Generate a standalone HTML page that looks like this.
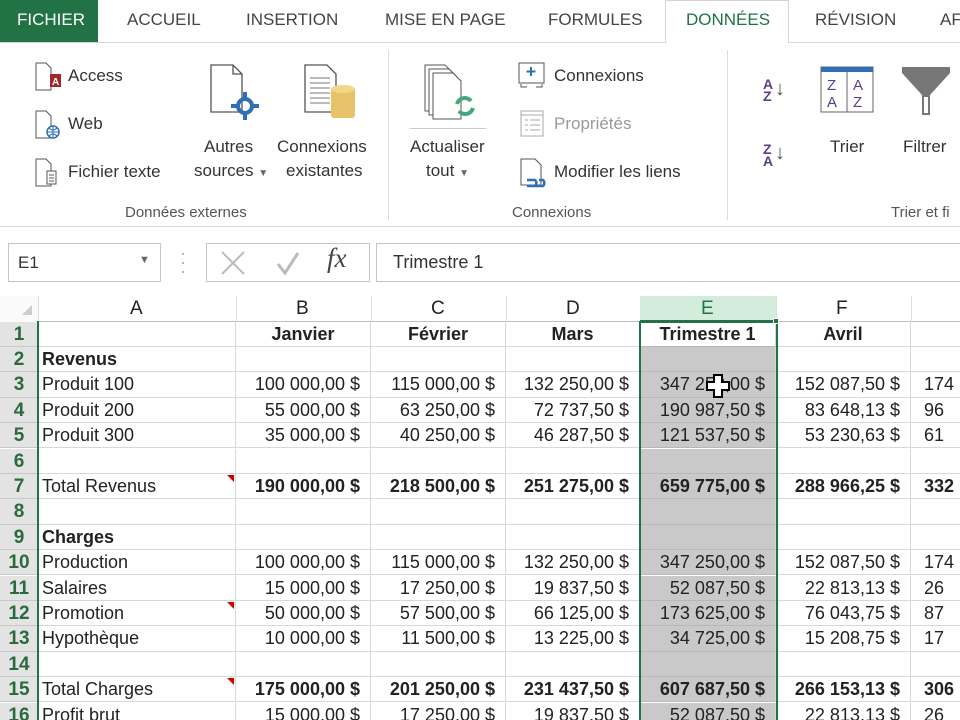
<!DOCTYPE html>
<html style="width:960px;height:720px;overflow:hidden"><head><meta charset="utf-8"><style>
*{margin:0;padding:0;box-sizing:border-box}
body{width:960px;height:720px;overflow:hidden;background:#fff;font-family:"Liberation Sans",Arial,sans-serif;position:relative;color:#222}
.a{position:absolute;white-space:nowrap}
.tab{position:absolute;top:10px;font-size:17px;color:#444}
.rb{font-size:17px;color:#333}
.grp{font-size:15px;color:#555;top:204px}
.row{position:absolute;left:0;height:25.4px;width:960px;font-size:18px}
.row div{position:absolute;top:0;height:25.4px;line-height:25px;border-right:1px solid #d8d8d8;border-bottom:1px solid #d8d8d8;white-space:nowrap;overflow:hidden}
.rh{left:0;width:38px;background:#e3e3e3;color:#2a6a3e;text-align:center;font-size:19px;font-weight:bold;border-right:none!important;border-bottom:1px solid #c8c8c8!important}
.ca{left:38px;width:198px;padding-left:4px}
.cb{left:236px;width:135px;text-align:right;padding-right:10px}
.cc{left:371px;width:135px;text-align:right;padding-right:10px}
.cd{left:506px;width:134px;text-align:right;padding-right:10px}
.ce{left:640px;width:136px;text-align:right;padding-right:10px;background:#c9c9c9;border-bottom-color:#b8b8b8!important}
.cf{left:776px;width:135px;text-align:right;padding-right:10px}
.cg{left:911px;width:60px;padding-left:13px}
.b{font-weight:bold}
.c{text-align:center!important;padding:0!important}
.tri{position:absolute;right:1px;top:1px;width:0;height:0;border-top:7px solid #c00;border-left:7px solid transparent}
</style></head><body>
<div class="a" style="left:0;top:0;width:98px;height:42px;background:#217346"></div>
<div class="tab" style="left:17px;color:#fff">FICHIER</div>
<div class="tab" style="left:127px">ACCUEIL</div>
<div class="tab" style="left:246px">INSERTION</div>
<div class="tab" style="left:385px">MISE EN PAGE</div>
<div class="tab" style="left:548px">FORMULES</div>
<div class="a" style="left:665px;top:0;width:124px;height:43px;border:1px solid #d4d4d4;border-bottom:none;background:#fff;z-index:2"></div>
<div class="tab" style="left:686px;color:#217346;z-index:3">DONNÉES</div>
<div class="tab" style="left:815px">RÉVISION</div>
<div class="tab" style="left:940px">AF</div>
<div class="a" style="left:0;top:42px;width:960px;height:1px;background:#d4d4d4"></div>
<div class="a" style="left:0;top:226px;width:960px;height:1px;background:#d4d4d4"></div>
<div class="a" style="left:388px;top:50px;width:1px;height:170px;background:#dcdcdc"></div>
<div class="a" style="left:727px;top:50px;width:1px;height:170px;background:#dcdcdc"></div>

<svg class="a" style="left:34px;top:62px" width="30" height="30"><path d="M2 1h10l5 5v22H2z" fill="#fff" stroke="#555"/><rect x="16" y="12" width="11" height="13" fill="#a4262c"/><text x="18" y="23" font-size="10" fill="#fff" font-family="Liberation Sans" font-weight="bold">A</text></svg>
<div class="a rb" style="left:68px;top:66px">Access</div>
<svg class="a" style="left:34px;top:110px" width="30" height="30"><path d="M2 1h10l5 5v22H2z" fill="#fff" stroke="#555"/><circle cx="19" cy="22" r="6" fill="#fff" stroke="#2e6fb5" stroke-width="1.5"/><path d="M13 22h12M19 16v12M15 18q4 4 8 0M15 26q4-4 8 0" stroke="#2e6fb5" fill="none"/></svg>
<div class="a rb" style="left:68px;top:114px">Web</div>
<svg class="a" style="left:34px;top:158px" width="30" height="30"><path d="M2 1h10l5 5v22H2z" fill="#fff" stroke="#555"/><rect x="13" y="13" width="9" height="13" fill="#fff" stroke="#555"/><path d="M15 17h5M15 20h5M15 23h5" stroke="#555"/></svg>
<div class="a rb" style="left:68px;top:162px">Fichier texte</div>
<svg class="a" style="left:208px;top:62px" width="56" height="62"><path d="M3 3h22l9 9v38H3z" fill="#fff" stroke="#555" stroke-width="1.3"/><path d="M25 3v9h9" fill="none" stroke="#555" stroke-width="1.3"/><circle cx="37" cy="44" r="7" fill="none" stroke="#2e6fb5" stroke-width="4"/><path d="M37 30v8M37 50v8M23 44h8M43 44h8" stroke="#2e6fb5" stroke-width="4"/></svg>
<div class="a rb" style="left:204px;top:137px">Autres</div>
<div class="a rb" style="left:194px;top:161px">sources <span style="font-size:10px;color:#666">▼</span></div>
<svg class="a" style="left:302px;top:62px" width="56" height="62"><path d="M3 3h22l9 9v38H3z" fill="#fff" stroke="#555" stroke-width="1.3"/><path d="M8 16h20M8 21h20M8 26h20M8 31h20M8 36h20M8 41h20" stroke="#777"/><rect x="29" y="26" width="24" height="30" rx="3" fill="#e8c26a"/><ellipse cx="41" cy="27" rx="12" ry="4" fill="#f3d68a"/></svg>
<div class="a rb" style="left:277px;top:137px">Connexions</div>
<div class="a rb" style="left:286px;top:161px">existantes</div>
<div class="a grp" style="left:125px">Données externes</div>

<svg class="a" style="left:422px;top:62px" width="60" height="62"><path d="M3 3h20l8 8v38H3z" fill="#fff" stroke="#555"/><path d="M7 7h20l8 8v38H7z" fill="#fff" stroke="#555"/><path d="M11 11h20l8 8v38H11z" fill="#fff" stroke="#555"/><path d="M35 42a8 8 0 0 1 14-3M51 46a8 8 0 0 1-14 3" stroke="#3fa77a" stroke-width="4" fill="none"/></svg>
<div class="a" style="left:410px;top:128px;width:76px;height:1px;background:#ccc"></div>
<div class="a rb" style="left:410px;top:137px">Actualiser</div>
<div class="a rb" style="left:426px;top:161px">tout <span style="font-size:10px;color:#666">▼</span></div>
<svg class="a" style="left:518px;top:62px" width="28" height="26"><rect x="1" y="1" width="25" height="20" fill="#fff" stroke="#555"/><path d="M13 5v9M8.5 9.5h9" stroke="#2e6fb5" stroke-width="2"/><path d="M3 22v3h6M18 25h6v-3" stroke="#555" fill="none"/></svg>
<div class="a rb" style="left:554px;top:66px">Connexions</div>
<svg class="a" style="left:520px;top:110px" width="26" height="28"><rect x="1" y="1" width="22" height="25" fill="#fff" stroke="#aaa"/><path d="M1 5h22M5 10h3M10 10h10M5 15h3M10 15h10M5 20h3M10 20h10" stroke="#aaa"/></svg>
<div class="a rb" style="left:554px;top:114px;color:#999">Propriétés</div>
<svg class="a" style="left:518px;top:157px" width="30" height="32"><path d="M3 2h14l6 6v20H3z" fill="#fff" stroke="#555"/><path d="M9 23h8a4 4 0 0 1 0 6h-8M21 23h4a4 4 0 0 1 0 6h-8" stroke="#2e6fb5" stroke-width="2.5" fill="none"/></svg>
<div class="a rb" style="left:554px;top:162px">Modifier les liens</div>
<div class="a grp" style="left:512px">Connexions</div>

<div class="a" style="left:763px;top:78px;font-size:14px;line-height:12px;color:#5b3d8a;font-weight:bold">A<br>Z</div>
<div class="a" style="left:775px;top:78px;font-size:20px;color:#555">↓</div>
<div class="a" style="left:763px;top:143px;font-size:14px;line-height:12px;color:#5b3d8a;font-weight:bold">Z<br>A</div>
<div class="a" style="left:775px;top:142px;font-size:20px;color:#555">↓</div>
<svg class="a" style="left:820px;top:65px" width="56" height="50"><rect x="1" y="2" width="52" height="45" fill="#fff" stroke="#666"/><rect x="1" y="2" width="52" height="5" fill="#2e6fb5"/><path d="M27 7v40" stroke="#666"/><text x="7" y="25" font-size="15" fill="#5b3d8a" font-family="Liberation Sans">Z</text><text x="7" y="42" font-size="15" fill="#5b3d8a" font-family="Liberation Sans">A</text><text x="33" y="25" font-size="15" fill="#5b3d8a" font-family="Liberation Sans">A</text><text x="33" y="42" font-size="15" fill="#5b3d8a" font-family="Liberation Sans">Z</text></svg>
<div class="a rb" style="left:830px;top:137px">Trier</div>
<svg class="a" style="left:900px;top:65px" width="52" height="52"><path d="M2 2h48v6L30 30v20h-8V30L2 8z" fill="#777"/><path d="M24 32v16h4V32" fill="#fff"/></svg>
<div class="a rb" style="left:903px;top:137px">Filtrer</div>
<div class="a grp" style="left:891px">Trier et fi</div>

<div class="a" style="left:8px;top:243px;width:153px;height:39px;border:1px solid #c6c6c6"></div>
<div class="a" style="left:18px;top:253px;font-size:17px;color:#333">E1</div>
<div class="a" style="left:139px;top:254px;font-size:11px;color:#666">▼</div>
<div class="a" style="left:180px;top:249px;font-size:18px;color:#aaa;line-height:9px">·<br>·<br>·</div>
<div class="a" style="left:206px;top:243px;width:164px;height:39px;border:1px solid #c6c6c6"></div>
<svg class="a" style="left:218px;top:248px" width="140" height="30"><path d="M4 4l22 22M26 4L4 26" stroke="#bbb" stroke-width="2"/><path d="M60 16l7 9 13-20" stroke="#bbb" stroke-width="3" fill="none"/></svg>
<div class="a" style="left:327px;top:243px;font-size:27px;font-family:'Liberation Serif',serif;font-style:italic;color:#444">fx</div>
<div class="a" style="left:376px;top:243px;width:600px;height:39px;border:1px solid #c6c6c6"></div>
<div class="a" style="left:393px;top:252px;font-size:18px;color:#333">Trimestre 1</div>

<div class="a" style="left:0;top:296px;width:960px;height:26px;background:#fff;border-bottom:1px solid #bfbfbf"></div>
<div class="a" style="left:0;top:296px;width:38px;height:26px;background:#fafafa"></div>
<div class="a" style="left:22px;top:305px;width:0;height:0;border-bottom:10px solid #ccc;border-left:10px solid transparent"></div>
<div class="a" style="left:640px;top:296px;width:136px;height:26px;background:#d3ecdc;border-bottom:2px solid #217346"></div>
<div class="a" style="left:38px;top:296px;width:1px;height:26px;background:#ddd"></div>
<div class="a" style="left:236px;top:296px;width:1px;height:26px;background:#ddd"></div>
<div class="a" style="left:371px;top:296px;width:1px;height:26px;background:#ddd"></div>
<div class="a" style="left:506px;top:296px;width:1px;height:26px;background:#ddd"></div>
<div class="a" style="left:776px;top:296px;width:1px;height:26px;background:#ddd"></div>
<div class="a" style="left:911px;top:296px;width:1px;height:26px;background:#ddd"></div>
<div class="a" style="left:130px;top:298px;font-size:19px">A</div>
<div class="a" style="left:296px;top:298px;font-size:19px">B</div>
<div class="a" style="left:431px;top:298px;font-size:19px">C</div>
<div class="a" style="left:566px;top:298px;font-size:19px">D</div>
<div class="a" style="left:701px;top:298px;font-size:19px;color:#217346">E</div>
<div class="a" style="left:836px;top:298px;font-size:19px">F</div>

<div class="row" style="top:321.5px"><div class="rh">1</div><div class="ca"></div><div class="cb b c">Janvier</div><div class="cc b c">Février</div><div class="cd b c">Mars</div><div class="ce b c" style="background:#fff">Trimestre 1</div><div class="cf b c">Avril</div><div class="cg"></div></div>
<div class="row" style="top:346.9px"><div class="rh">2</div><div class="ca b">Revenus</div><div class="cb"></div><div class="cc"></div><div class="cd"></div><div class="ce"></div><div class="cf"></div><div class="cg"></div></div>
<div class="row" style="top:372.3px"><div class="rh">3</div><div class="ca">Produit 100</div><div class="cb">100 000,00 $</div><div class="cc">115 000,00 $</div><div class="cd">132 250,00 $</div><div class="ce">347 250,00 $</div><div class="cf">152 087,50 $</div><div class="cg">174</div></div>
<div class="row" style="top:397.7px"><div class="rh">4</div><div class="ca">Produit 200</div><div class="cb">55 000,00 $</div><div class="cc">63 250,00 $</div><div class="cd">72 737,50 $</div><div class="ce">190 987,50 $</div><div class="cf">83 648,13 $</div><div class="cg">96</div></div>
<div class="row" style="top:423.1px"><div class="rh">5</div><div class="ca">Produit 300</div><div class="cb">35 000,00 $</div><div class="cc">40 250,00 $</div><div class="cd">46 287,50 $</div><div class="ce">121 537,50 $</div><div class="cf">53 230,63 $</div><div class="cg">61</div></div>
<div class="row" style="top:448.5px"><div class="rh">6</div><div class="ca"></div><div class="cb"></div><div class="cc"></div><div class="cd"></div><div class="ce"></div><div class="cf"></div><div class="cg"></div></div>
<div class="row" style="top:473.9px"><div class="rh">7</div><div class="ca">Total Revenus<span class="tri"></span></div><div class="cb b">190 000,00 $</div><div class="cc b">218 500,00 $</div><div class="cd b">251 275,00 $</div><div class="ce b">659 775,00 $</div><div class="cf b">288 966,25 $</div><div class="cg b">332</div></div>
<div class="row" style="top:499.3px"><div class="rh">8</div><div class="ca"></div><div class="cb"></div><div class="cc"></div><div class="cd"></div><div class="ce"></div><div class="cf"></div><div class="cg"></div></div>
<div class="row" style="top:524.7px"><div class="rh">9</div><div class="ca b">Charges</div><div class="cb"></div><div class="cc"></div><div class="cd"></div><div class="ce"></div><div class="cf"></div><div class="cg"></div></div>
<div class="row" style="top:550.1px"><div class="rh">10</div><div class="ca">Production</div><div class="cb">100 000,00 $</div><div class="cc">115 000,00 $</div><div class="cd">132 250,00 $</div><div class="ce">347 250,00 $</div><div class="cf">152 087,50 $</div><div class="cg">174</div></div>
<div class="row" style="top:575.5px"><div class="rh">11</div><div class="ca">Salaires</div><div class="cb">15 000,00 $</div><div class="cc">17 250,00 $</div><div class="cd">19 837,50 $</div><div class="ce">52 087,50 $</div><div class="cf">22 813,13 $</div><div class="cg">26</div></div>
<div class="row" style="top:600.9px"><div class="rh">12</div><div class="ca">Promotion<span class="tri"></span></div><div class="cb">50 000,00 $</div><div class="cc">57 500,00 $</div><div class="cd">66 125,00 $</div><div class="ce">173 625,00 $</div><div class="cf">76 043,75 $</div><div class="cg">87</div></div>
<div class="row" style="top:626.3px"><div class="rh">13</div><div class="ca">Hypothèque</div><div class="cb">10 000,00 $</div><div class="cc">11 500,00 $</div><div class="cd">13 225,00 $</div><div class="ce">34 725,00 $</div><div class="cf">15 208,75 $</div><div class="cg">17</div></div>
<div class="row" style="top:651.7px"><div class="rh">14</div><div class="ca"></div><div class="cb"></div><div class="cc"></div><div class="cd"></div><div class="ce"></div><div class="cf"></div><div class="cg"></div></div>
<div class="row" style="top:677.1px"><div class="rh">15</div><div class="ca">Total Charges<span class="tri"></span></div><div class="cb b">175 000,00 $</div><div class="cc b">201 250,00 $</div><div class="cd b">231 437,50 $</div><div class="ce b">607 687,50 $</div><div class="cf b">266 153,13 $</div><div class="cg b">306</div></div>
<div class="row" style="top:702.5px"><div class="rh">16</div><div class="ca">Profit brut</div><div class="cb">15 000,00 $</div><div class="cc">17 250,00 $</div><div class="cd">19 837,50 $</div><div class="ce">52 087,50 $</div><div class="cf">22 813,13 $</div><div class="cg">26</div></div>

<div class="a" style="left:37px;top:321px;width:2px;height:399px;background:#217346"></div>
<div class="a" style="left:639px;top:321px;width:139px;height:399px;border:2px solid #217346;border-bottom:none"></div>
<div class="a" style="left:773px;top:318px;width:6px;height:6px;background:#217346;border:1px solid #fff"></div>
<svg class="a" style="left:706px;top:374px" width="26" height="26"><path d="M8 1h8v7h7v8h-7v7H8v-7H1V8h7z" fill="#fff" stroke="#000" stroke-width="2"/></svg>
</body></html>
